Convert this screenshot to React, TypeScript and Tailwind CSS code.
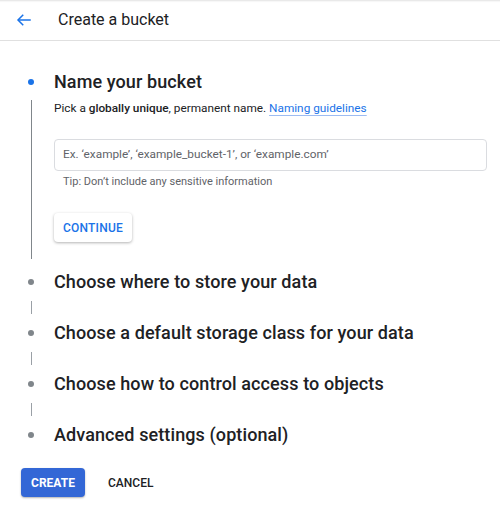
import React from "react";

const steps = [
  "Choose where to store your data",
  "Choose a default storage class for your data",
  "Choose how to control access to objects",
  "Advanced settings (optional)",
];

export default function App() {
  return (
    <div
      className="w-[500px] h-[508px] bg-white text-[#202124] overflow-hidden"
      style={{ fontFamily: "Roboto, 'Liberation Sans', sans-serif" }}
    >
      {/* Header */}
      <div className="h-[41px] flex items-center border-b border-[#e0e0e0] shadow-[inset_0_3px_2px_-2px_rgba(0,0,0,0.12)]">
        <svg
          className="ml-[15px]"
          width="18"
          height="18"
          viewBox="0 0 24 24"
          fill="none"
          stroke="#1a73e8"
          strokeWidth="2"
          strokeLinecap="square"
        >
          <path d="M20 12H5" />
          <path d="M11 5l-7 7 7 7" strokeLinecap="butt" strokeLinejoin="miter" />
        </svg>
        <div className="ml-[25px] text-[16px] leading-[20px]">Create a bucket</div>
      </div>

      {/* Steps */}
      <div className="pl-[28px] pt-[27px]">
        {/* Step 1 */}
        <div className="flex gap-[20px]">
          <div className="w-[6px] flex flex-col items-center">
            <div className="h-[28px] flex items-center">
              <div className="w-[6px] h-[6px] rounded-full bg-[#1a73e8]" />
            </div>
            <div className="w-px flex-1 bg-[#80868b] mt-[4px] mb-[9px]" />
          </div>
          <div className="flex-1 pr-[13px] pb-[26px]">
            <div className="text-[18px] leading-[28px] font-medium tracking-[0.1px]">Name your bucket</div>
            <div className="mt-[2px] text-[11.8px] leading-[20px]">
              Pick a <span className="font-medium">globally unique</span>, permanent name.{" "}
              <span className="text-[#1a73e8] underline decoration-[#9dbcf2] underline-offset-[3px]">
                Naming guidelines
              </span>
            </div>
            <div className="mt-[21px] h-[32px] border border-[#dadce0] rounded-[4px] flex items-center px-[8px] text-[11.8px] text-[#5f6368]">
              Ex. ‘example’, ‘example_bucket-1’, or ‘example.com’
            </div>
            <div className="mt-[3px] pl-[9px] text-[11px] leading-[16px] text-[#5f6368]">
              Tip: Don’t include any sensitive information
            </div>
            <button className="mt-[23px] h-[29px] w-[78px] rounded-[4px] bg-white shadow-[0_1px_3px_rgba(0,0,0,0.3)] text-[12px] font-medium text-[#1a73e8] tracking-[0.2px]">
              CONTINUE
            </button>
          </div>
        </div>

        {steps.map((s, i) => (
          <div key={s} className="flex gap-[20px] h-[51px]">
            <div className="w-[6px] flex flex-col items-center">
              <div className="h-[28px] flex items-center">
                <div className="w-[6px] h-[6px] rounded-full bg-[#80868b]" />
              </div>
              {i < steps.length - 1 && <div className="w-px h-[13px] bg-[#9aa0a6] mt-[5px]" />}
            </div>
            <div className="text-[18px] leading-[28px] font-medium tracking-[0.1px]">{s}</div>
          </div>
        ))}
      </div>

      {/* Footer */}
      <div className="flex items-center pl-[21px] mt-[-4px]">
        <button className="h-[29px] w-[64px] rounded-[4px] bg-[#3367d6] text-white text-[12px] font-bold shadow-[0_1px_2px_rgba(0,0,0,0.3)]">
          CREATE
        </button>
        <button className="ml-[8px] h-[29px] px-[15px] text-[12px] font-medium text-[#202124]">
          CANCEL
        </button>
      </div>
    </div>
  );
}
